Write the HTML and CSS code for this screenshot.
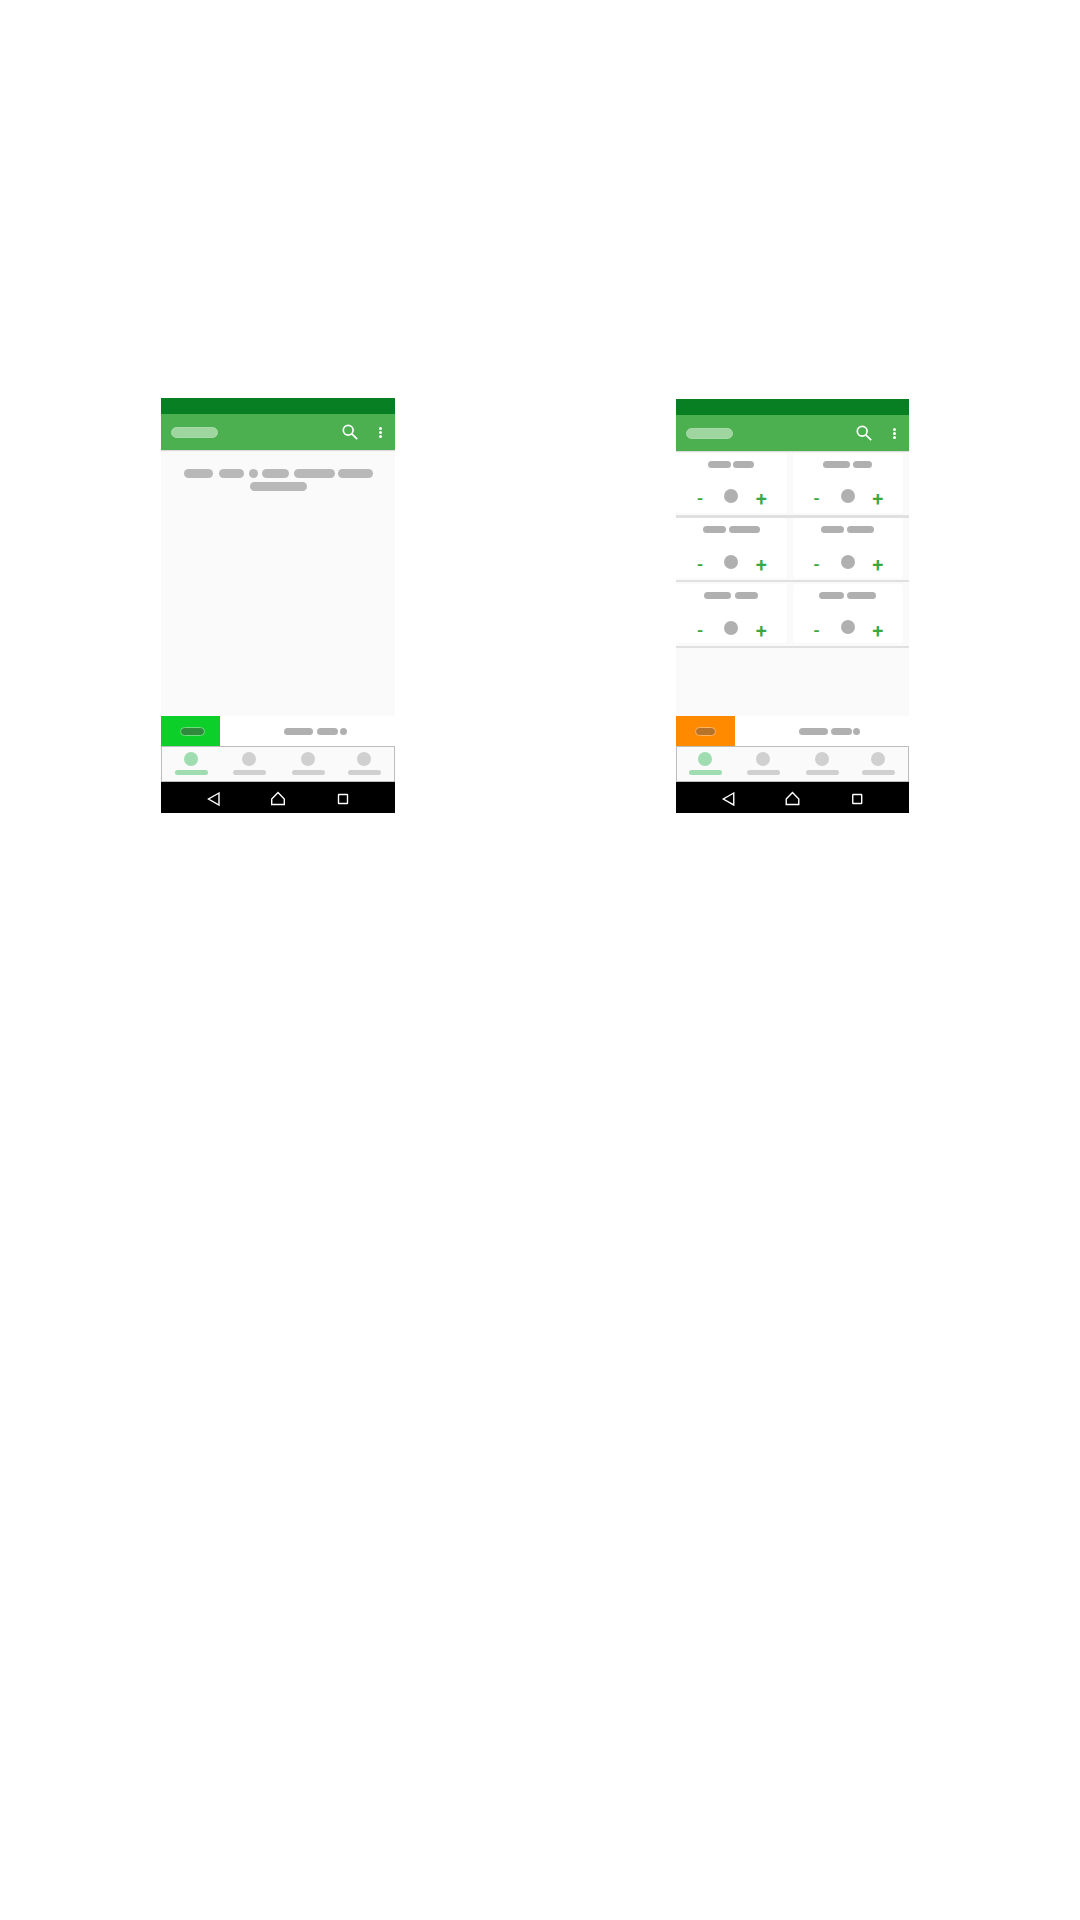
FILE: index.html
```html
<!DOCTYPE html>
<html lang="en">
<head>
<meta charset="utf-8">
<title>Counter screens</title>
<link rel="stylesheet" href="styles.css">
</head>
<body>
<main class="stage">
  <section class="phone">
    <div class="status"></div>
    <header class="appbar">
      <span class="title"></span>
      <svg class="search" viewBox="0 0 16 16"><circle cx="6.2" cy="6.2" r="4.9"/><path d="M9.8 9.8 15.2 15.2"/></svg>
      <span class="dots"><i></i><i></i><i></i></span>
    </header>
    <div class="content message">
      <div class="line">
        <span class="pill w29"></span><span class="pill w25"></span><span class="pill w9"></span><span class="pill w27"></span><span class="pill w41"></span><span class="pill w35"></span>
      </div>
      <div class="line"><span class="pill w57"></span></div>
    </div>
    <div class="action">
      <div class="badge green"><span class="badge-pill"></span></div>
      <div class="action-text"><span class="apill a29"></span><span class="apill a21"></span><span class="apill a7"></span></div>
    </div>
    <nav class="tabs">
      <div class="tab on"><b></b><u></u></div>
      <div class="tab t2"><b></b><u></u></div>
      <div class="tab t3"><b></b><u></u></div>
      <div class="tab t4"><b></b><u></u></div>
    </nav>
    <div class="sysnav">
      <svg viewBox="0 0 234 31"><path d="M58 11 47.5 17 58 23Z"/><path d="M110.7 17 117 10.5 123.3 17V22.5H110.7Z"/><rect x="177.5" y="12.5" width="9" height="9" rx=".5"/></svg>
    </div>
  </section>
  <section class="phone second">
    <div class="status"></div>
    <header class="appbar">
      <span class="title"></span>
      <svg class="search" viewBox="0 0 16 16"><circle cx="6.2" cy="6.2" r="4.9"/><path d="M9.8 9.8 15.2 15.2"/></svg>
      <span class="dots"><i></i><i></i><i></i></span>
    </header>
    <div class="content grid">
      <div class="row">
        <div class="cell"><div class="name g2"><span class="pill p23"></span><span class="pill p21"></span></div><div class="ctrl"><span class="minus">-</span><span class="dot"></span><span class="plus">+</span></div></div>
        <div class="cell"><div class="name"><span class="pill p27"></span><span class="pill p19"></span></div><div class="ctrl"><span class="minus">-</span><span class="dot"></span><span class="plus">+</span></div></div>
      </div>
      <div class="row">
        <div class="cell"><div class="name"><span class="pill p23"></span><span class="pill p31"></span></div><div class="ctrl"><span class="minus">-</span><span class="dot"></span><span class="plus">+</span></div></div>
        <div class="cell"><div class="name"><span class="pill p23"></span><span class="pill p27"></span></div><div class="ctrl"><span class="minus">-</span><span class="dot"></span><span class="plus">+</span></div></div>
      </div>
      <div class="row">
        <div class="cell"><div class="name g4"><span class="pill p27"></span><span class="pill p23"></span></div><div class="ctrl"><span class="minus">-</span><span class="dot"></span><span class="plus">+</span></div></div>
        <div class="cell"><div class="name"><span class="pill p25"></span><span class="pill p29"></span></div><div class="ctrl"><span class="minus">-</span><span class="dot up"></span><span class="plus">+</span></div></div>
      </div>
    </div>
    <div class="action">
      <div class="badge orange"><span class="badge-pill"></span></div>
      <div class="action-text"><span class="apill a29"></span><span class="apill a21"></span><span class="apill a7"></span></div>
    </div>
    <nav class="tabs">
      <div class="tab on"><b></b><u></u></div>
      <div class="tab t2"><b></b><u></u></div>
      <div class="tab t3"><b></b><u></u></div>
      <div class="tab t4"><b></b><u></u></div>
    </nav>
    <div class="sysnav">
      <svg viewBox="0 0 234 31"><path d="M58 11 47.5 17 58 23Z"/><path d="M110.7 17 117 10.5 123.3 17V22.5H110.7Z"/><rect x="177.5" y="12.5" width="9" height="9" rx=".5"/></svg>
    </div>
  </section>
</main>
</body>
</html>
```
FILE: styles.css
```css
* { box-sizing: border-box; }
html, body { margin: 0; background: #fff; }
body { width: 1080px; height: 1920px; overflow: hidden; font-family: "Roboto", "Liberation Sans", sans-serif; }
.stage { display: flex; align-items: flex-start; padding: 398px 0 0 161px; gap: 281px; }
.phone { width: 234px; display: flex; flex-direction: column; }
.second { width: 233px; margin-top: 1px; }
.status { height: 16px; background: #087f23; }
.appbar { height: 36px; background: #4caf50; display: flex; align-items: center; padding: 0 13px 0 10px; box-shadow: 0 1px 1px rgba(0,0,0,.12); position: relative; z-index: 1; }
.title { width: 47px; height: 11px; border-radius: 6px; background: #9fd69f; border: 1px solid #a9daa9; }
.search { width: 16px; height: 16px; margin-left: auto; fill: none; stroke: #fff; stroke-width: 1.7; }
.dots { display: flex; flex-direction: column; gap: 1px; margin-left: 21px; }
.dots i { width: 3px; height: 3px; border-radius: 50%; background: #fff; }
.content { height: 266px; background: #fafafa; }
.second .content { height: 265px; }
.message { padding-top: 19px; display: flex; flex-direction: column; gap: 4px; }
.line { display: flex; justify-content: center; }
.pill { display: block; height: 9px; border-radius: 5px; background: #b8b8b8; }
.w29 { width: 29px; margin-right: 6px; }
.w25 { width: 25px; margin-right: 5px; }
.w9 { width: 9px; margin-right: 4px; }
.w27 { width: 27px; margin-right: 5px; }
.w41 { width: 41px; margin-right: 3px; }
.w35 { width: 35px; }
.w57 { width: 57px; }
.grid { display: flex; flex-direction: column; }
.row { display: flex; gap: 6px; padding: 2px 6px 2px 0; border-bottom: 2px solid #e0e0e0; }
.row:nth-child(1) { height: 67px; border-bottom-width: 3px; }
.row:nth-child(2) { height: 64px; padding-top: 0; }
.row:nth-child(3) { height: 66px; padding-bottom: 3px; }
.cell { flex: 1; background: #fff; border-radius: 3px; display: flex; flex-direction: column; align-items: center; }
.name { display: flex; gap: 3px; padding-top: 8px; }
.g2 { gap: 2px; }
.g4 { gap: 4px; }
.name .pill { height: 7px; background: #b0b0b0; }
.p19 { width: 19px; } .p21 { width: 21px; } .p23 { width: 23px; } .p25 { width: 25px; } .p27 { width: 27px; } .p29 { width: 29px; } .p31 { width: 31px; }
.ctrl { width: 100%; display: grid; grid-template-columns: 1fr 14px 1fr; justify-items: center; align-items: center; margin-top: 22px; color: #3aa83f; }
.row:nth-child(1) .ctrl { margin-top: 21px; }
.minus { font-size: 18px; line-height: 18px; font-weight: 500; }
.plus { font-size: 20px; line-height: 18px; font-weight: 500; margin-right: 2px; }
.dot { width: 14px; height: 14px; border-radius: 50%; background: #b0b0b0; margin-bottom: 6px; }
.up { margin-top: -1px; margin-bottom: 7px; }
.action { height: 30px; background: #fff; display: flex; }
.badge { width: 59px; display: flex; align-items: center; justify-content: center; }
.green { background: #0dcf2a; }
.orange { background: #ff8a00; }
.badge-pill { width: 25px; height: 9px; border-radius: 5px; }
.green .badge-pill { margin-left: 4px; background: #2f8a3e; border: 1px solid #6fdc7c; }
.orange .badge-pill { width: 21px; background: #b8732a; border: 1px solid #ffb35c; }
.action-text { display: flex; align-items: center; padding-left: 64px; }
.apill { display: block; height: 7px; border-radius: 4px; background: #b0b0b0; }
.a29 { width: 29px; }
.a21 { width: 21px; margin-left: 4px; }
.a7 { width: 7px; margin-left: 2px; }
.second .a21 { margin-left: 3px; }
.second .a7 { margin-left: 1px; }
.tabs { height: 36px; background: #fafafa; border: 1px solid #bdbdbd; display: flex; padding: 5px 0 0 13px; }
.second .tabs { padding-left: 12px; }
.tab { display: flex; flex-direction: column; align-items: center; gap: 4px; width: 33px; }
.t2 { margin-left: 25px; }
.t3 { margin-left: 26px; }
.t4 { margin-left: 23px; }
.tab b { width: 14px; height: 14px; margin-right: 1px; border-radius: 50%; background: #d0d0d0; }
.tab u { width: 33px; height: 5px; border-radius: 3px; background: #d0d0d0; }
.on b, .on u { background: #9fdcb0; }
.sysnav { height: 31px; background: #000; }
.sysnav svg { display: block; width: 100%; height: 31px; fill: none; stroke: #fff; stroke-width: 1.4; }
```
